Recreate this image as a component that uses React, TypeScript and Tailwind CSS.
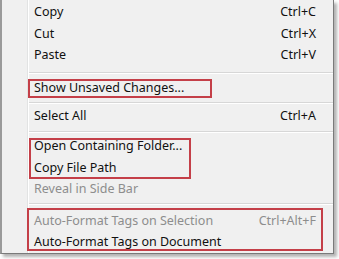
import React from 'react'

type Item = { label: string; keys?: string; off?: boolean; h?: string }
type Row = Item | { sep: string; line: string }

const rows: Row[] = [
  { label: 'Copy', keys: 'Ctrl+C' },
  { label: 'Cut', keys: 'Ctrl+X' },
  { label: 'Paste', keys: 'Ctrl+V' },
  { sep: 'h-[11px]', line: 'mt-[6px]' },
  { label: 'Show Unsaved Changes...' },
  { sep: 'h-[7px]', line: 'mt-[3px]' },
  { label: 'Select All', keys: 'Ctrl+A' },
  { sep: 'h-[8.5px]', line: 'mt-[4px]' },
  { label: 'Open Containing Folder...' },
  { label: 'Copy File Path' },
  { label: 'Reveal in Side Bar', off: true },
  { sep: 'h-[10px]', line: 'mt-[3px]' },
  { label: 'Auto-Format Tags on Selection', keys: 'Ctrl+Alt+F', off: true },
  { label: 'Auto-Format Tags on Document' },
]

export default function App() {
  return (
    <div
      className="relative w-[339px] h-[259px] bg-white overflow-hidden"
      style={{ fontFamily: '"Noto Sans", "Liberation Sans", sans-serif' }}
    >
      {/* Menu */}
      <div className="flex w-[334px] h-[254px] bg-[#f0f0f0] border-l-2 border-r border-b border-l-[#9a9a9a] border-r-[#7a7a7a] border-b-[#7a7a7a] shadow-[3px_3px_3px_rgba(0,0,0,0.3)]">
        {/* Gutter */}
        <div className="w-[26px] shrink-0 border-r border-[#e2e3e3]" />
        <div className="w-px shrink-0 bg-white" />

        {/* Items */}
        <div className="flex-1 flex flex-col pt-[2px] text-[12.5px] leading-none">
          {rows.map((r, i) =>
            'sep' in r ? (
              <div key={i} className={r.sep}>
                <div className={`${r.line} h-px bg-[#d7d7d7]`} />
                <div className="h-px bg-white" />
              </div>
            ) : (
              <div
                key={i}
                className={`h-[21.5px] flex items-center justify-between pl-[5px] pr-[17px] ${r.off ? 'text-[#8d8d8d]' : 'text-[#111]'}`}
              >
                <span>{r.label}</span>
                {r.keys && <span>{r.keys}</span>}
              </div>
            )
          )}
        </div>
      </div>

      {/* Red highlight boxes */}
      <div className="absolute left-[28px] top-[79px] w-[184px] h-[19px] border-2 border-[#c43f48]" />
      <div className="absolute left-[29px] top-[138px] w-[162px] h-[41px] border-2 border-[#c43f48]" />
      <div className="absolute left-[27px] top-[208px] w-[296px] h-[43px] border-2 border-[#c43f48]" />
    </div>
  )
}
